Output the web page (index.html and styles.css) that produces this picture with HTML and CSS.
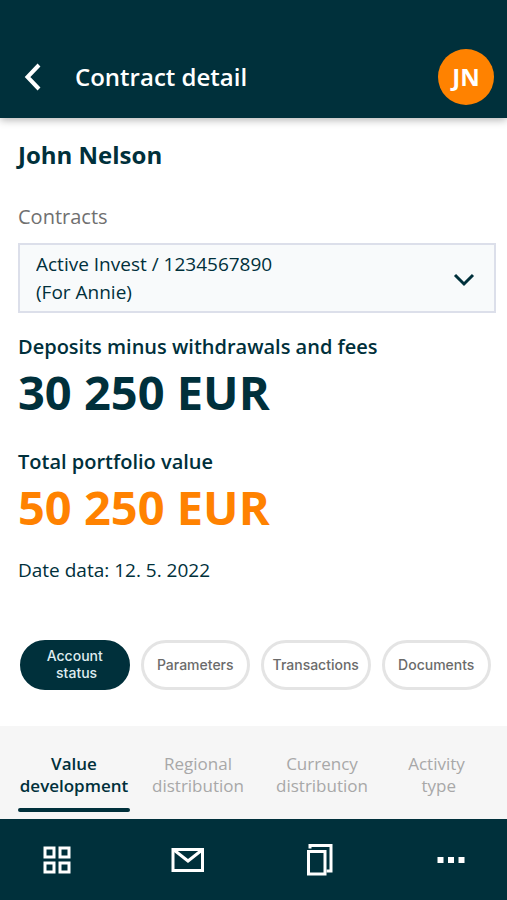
FILE: index.html
```html
<!DOCTYPE html>
<html lang="en">
<head>
<meta charset="utf-8">
<meta name="viewport" content="width=device-width, initial-scale=1">
<title>Contract detail</title>
<link rel="stylesheet" href="styles.css">
</head>
<body>
<header class="topbar">
  <button class="back" type="button" aria-label="Back">
    <svg width="20" height="28" viewBox="0 0 20 28" fill="none" stroke="currentColor" stroke-width="4"><path d="M16 2L4.500 14 16 26"/></svg>
  </button>
  <h1 class="topbar-title">Contract detail</h1>
  <button class="avatar" type="button">JN</button>
</header>
<main class="content">
  <h2 class="client">John Nelson</h2>
  <label class="label" for="contract">Contracts</label>
  <div class="picker">
    <select class="select" id="contract">
      <button class="select-button"><selectedcontent></selectedcontent></button>
      <option selected>Active Invest / 1234567890<br>(For Annie)</option>
    </select>
    <svg class="chevron" width="22" height="14" viewBox="0 0 22 14" fill="none" stroke="currentColor" stroke-width="3"><path d="M2 2l9 9 9-9"/></svg>
  </div>
  <section class="figure">
    <h3 class="figure-name">Deposits minus withdrawals and fees</h3>
    <p class="amount">30 250 EUR</p>
  </section>
  <section class="figure">
    <h3 class="figure-name">Total portfolio value</h3>
    <p class="amount amount-accent">50 250 EUR</p>
  </section>
  <p class="date">Date data: 12. 5. 2022</p>
  <div class="pills">
    <button class="pill pill-active" type="button">Account<br>&nbsp;status</button>
    <button class="pill" type="button">Parameters</button>
    <button class="pill" type="button">Transactions</button>
    <button class="pill" type="button">Documents</button>
  </div>
</main>
<div class="tabs" role="tablist">
  <button class="tab tab-active" type="button" role="tab" aria-selected="true">Value<br>development</button>
  <button class="tab" type="button" role="tab" aria-selected="false">Regional<br>distribution</button>
  <button class="tab" type="button" role="tab" aria-selected="false">Currency<br>distribution</button>
  <button class="tab" type="button" role="tab" aria-selected="false">Activity<br>&nbsp;type</button>
</div>
<nav class="bottom">
  <a class="nav-link" href="#overview" aria-label="Overview">
    <svg width="36" height="36" viewBox="0 0 36 36" fill="none" stroke="currentColor" stroke-width="3"><path d="M6 6h9v9H6zM21 6h9v9h-9zM6 21h9v9H6zM21 21h9v9h-9z"/></svg>
  </a>
  <a class="nav-link" href="#messages" aria-label="Messages">
    <svg width="36" height="36" viewBox="0 0 36 36" fill="none" stroke="currentColor" stroke-width="3"><path d="M3 7.500h29.500v21H3z"/><path d="M4 8l14 11L32 8"/></svg>
  </a>
  <a class="nav-link" href="#documents" aria-label="Documents">
    <svg width="36" height="36" viewBox="0 0 36 36" fill="none" stroke="currentColor" stroke-width="3"><path d="M6.500 9.500h16.500v22.500h-16.500z"/><path d="M8 6.500V3.500h21v25.500h-4.500"/></svg>
  </a>
  <a class="nav-link" href="#more" aria-label="More">
    <svg width="36" height="36" viewBox="0 0 36 36" fill="currentColor"><path d="M4.500 15h6v6h-6zM15 15h6v6h-6zM25.500 15h6v6h-6z"/></svg>
  </a>
</nav>
</body>
</html>
```
FILE: styles.css
```css
:root {
  --navy: #00303b;
  --orange: #ff8200;
}

* {
  box-sizing: border-box;
}

body {
  margin: 0;
  min-height: 100vh;
  display: flex;
  flex-direction: column;
  background: #fff;
  color: var(--navy);
  font-family: "Open Sans", "Noto Sans", sans-serif;
}

h1, h2, h3, p {
  margin: 0;
}

button {
  border: 0;
  padding: 0;
  background: none;
  color: inherit;
  font: inherit;
}

.topbar {
  display: flex;
  align-items: center;
  padding: 49px 13px 13px 23px;
  background: var(--navy);
  color: #fff;
  box-shadow: 0 2px 8px rgba(0, 0, 0, 0.3);
}

.back {
  display: flex;
  width: 52px;
}

.topbar-title {
  flex: 1;
  font-size: 24px;
  font-weight: 600;
  line-height: 32px;
}

.avatar {
  width: 56px;
  height: 56px;
  padding-bottom: 2px;
  border-radius: 50%;
  background: var(--orange);
  font-size: 24px;
  font-weight: 700;
}

.content {
  flex: 1;
  display: flex;
  flex-direction: column;
  padding: 21px 11px 36px 18px;
}

.client {
  margin-bottom: 32px;
  font-size: 24px;
  font-weight: 700;
  line-height: 32px;
}

.label {
  margin-bottom: 12px;
  color: #707070;
  font-size: 20px;
  line-height: 28px;
}

.picker {
  display: grid;
  align-items: center;
  margin-bottom: 20px;
}

.select, .chevron {
  grid-area: 1 / 1;
}

.select {
  appearance: base-select;
  width: 100%;
  padding: 5px 60px 5px 16px;
  border: 2px solid #dcdfea;
  border-radius: 0;
  background: #f8fafb;
  color: inherit;
  font: inherit;
  font-size: 19px;
  line-height: 28px;
}

.select::picker-icon {
  display: none;
}

.chevron {
  justify-self: end;
  margin: 4px 21px 0 0;
  pointer-events: none;
}

.figure {
  margin-bottom: 25px;
}

.figure-name {
  font-size: 20px;
  font-weight: 600;
  line-height: 28px;
}

.amount {
  font-size: 47px;
  font-weight: 700;
  line-height: 62px;
}

.amount-accent {
  color: var(--orange);
}

.date {
  margin: -7px 0 56px;
  font-size: 19px;
  line-height: 28px;
}

.pills {
  display: grid;
  grid-template-columns: repeat(4, 1fr);
  gap: 11px;
  padding: 0 5px 0 2px;
}

.pill {
  height: 50px;
  padding-bottom: 2px;
  border: 3px solid #e4e4e4;
  border-radius: 25px;
  color: #6b6b6b;
  font-family: Inter, sans-serif;
  font-size: 14px;
  font-weight: 500;
  line-height: 17px;
}

.pill-active {
  border-color: var(--navy);
  background: var(--navy);
  color: #dfecef;
}

.tabs {
  display: grid;
  grid-template-columns: 112fr 112fr 112fr 93fr;
  column-gap: 12px;
  padding: 27px 24px 7px 18px;
  background: #f6f6f6;
}

.tab {
  padding-bottom: 11px;
  border-bottom: 4px solid transparent;
  color: #a8a8a8;
  font-size: 17px;
  line-height: 22px;
}

.tab-active {
  position: relative;
  color: var(--navy);
  font-weight: 600;
}

.tab-active::after {
  content: "";
  position: absolute;
  inset: auto 0 -4px;
  height: 4px;
  border-radius: 2px;
  background: var(--navy);
}

.bottom {
  display: flex;
  justify-content: space-between;
  padding: 23px 38px 22px 39px;
  background: var(--navy);
  color: #fff;
}

.nav-link {
  display: flex;
  color: inherit;
}
```
